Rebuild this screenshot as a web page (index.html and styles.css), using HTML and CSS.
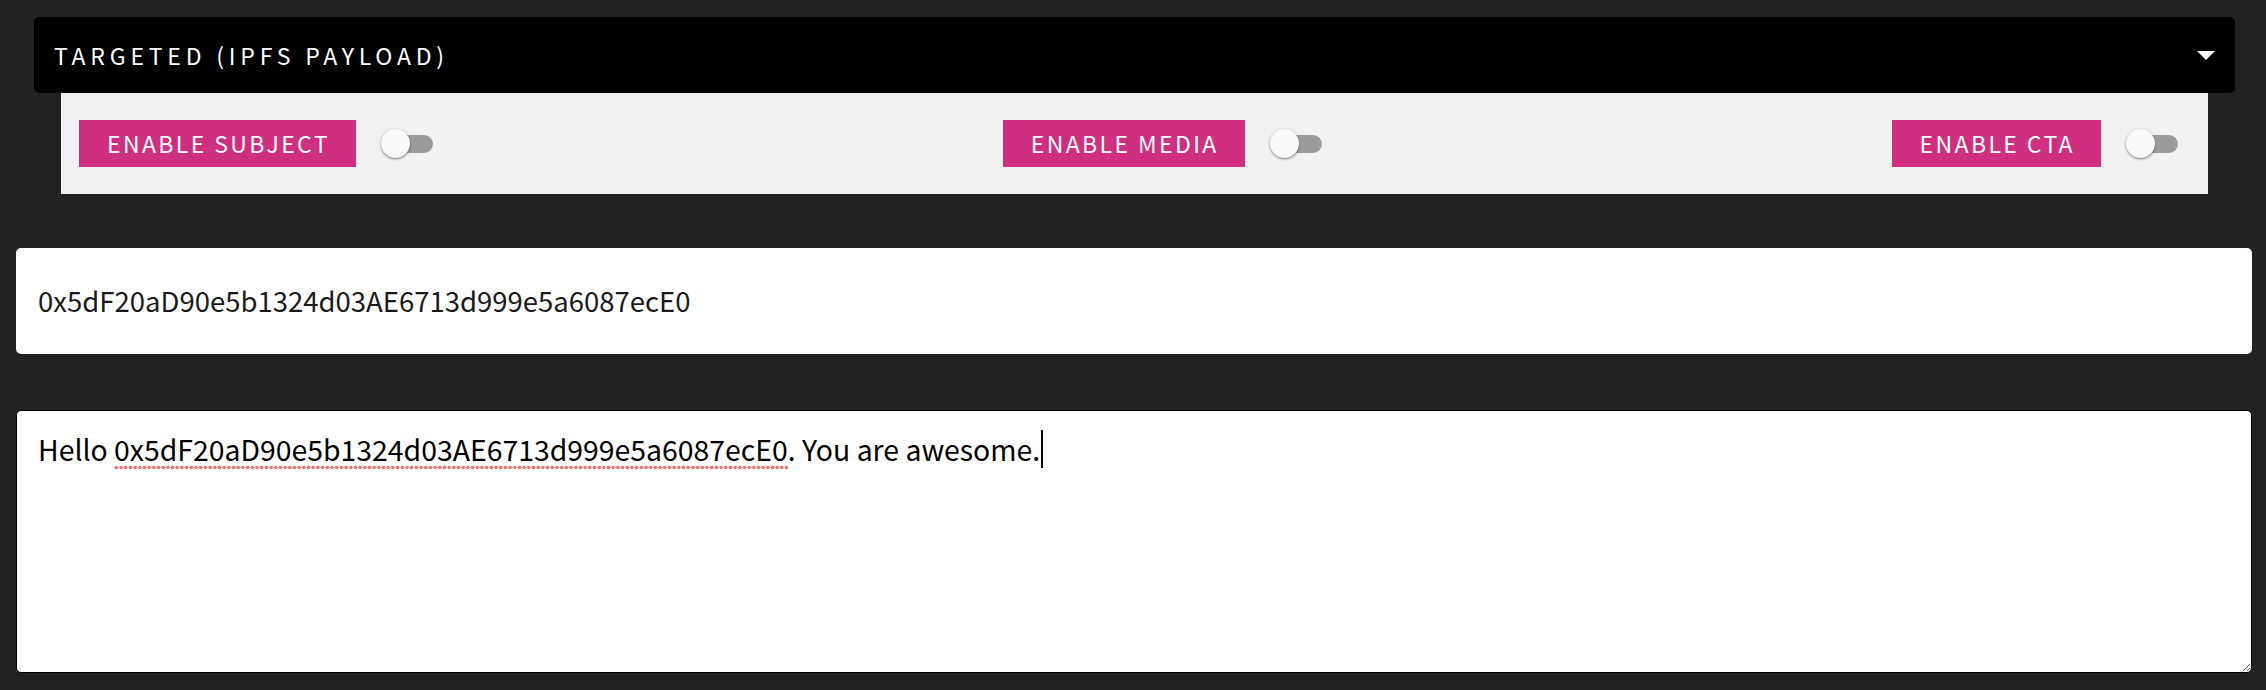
FILE: index.html
```html
<!DOCTYPE html>
<html lang="en">
<head>
<meta charset="utf-8">
<title>Targeted (IPFS Payload)</title>
<link rel="stylesheet" href="styles.css">
</head>
<body>
<div class="page">
  <section class="accordion">
    <div class="acc-header">
      <span class="acc-title">TARGETED (IPFS PAYLOAD)</span>
      <span class="acc-arrow"></span>
    </div>
    <div class="acc-panel">
      <div class="opt">
        <button class="pink-btn">ENABLE SUBJECT</button>
        <span class="switch"><span class="knob"></span></span>
      </div>
      <div class="opt">
        <button class="pink-btn">ENABLE MEDIA</button>
        <span class="switch"><span class="knob"></span></span>
      </div>
      <div class="opt">
        <button class="pink-btn">ENABLE CTA</button>
        <span class="switch"><span class="knob"></span></span>
      </div>
    </div>
  </section>

  <div class="field">0x5dF20aD90e5b1324d03AE6713d999e5a6087ecE0</div>

  <div class="area">Hello <span class="misspelled">0x5dF20aD90e5b1324d03AE6713d999e5a6087ecE0</span>. You are awesome.<span class="caret"></span></div>
</div>
</body>
</html>
```

FILE: styles.css
```css
* { box-sizing: border-box; }
html, body { margin: 0; padding: 0; }
body {
  background: #222222;
  font-family: "Noto Sans CJK JP", "Source Sans Pro", "Noto Sans", sans-serif;
  width: 2266px;
  height: 690px;
  overflow: hidden;
}
.page {
  padding: 17px 14px 0 16px;
}
.accordion {
  margin: 0 17px 0 18px;
}
.acc-header {
  height: 76px;
  background: #000;
  border-radius: 5px;
  display: flex;
  align-items: center;
  justify-content: space-between;
  padding: 0 20px 0 20px;
}
.acc-title {
  color: #fff;
  font-size: 23px;
  line-height: 1;
  letter-spacing: 4.8px;
}
.acc-arrow {
  width: 0;
  height: 0;
  border-left: 9px solid transparent;
  border-right: 9px solid transparent;
  border-top: 9px solid #fff;
}
.acc-panel {
  margin: 0 27px;
  height: 101px;
  background: #f1f1f1;
  display: flex;
  align-items: center;
  justify-content: space-between;
  padding: 0 30px 0 18px;
}
.opt {
  display: flex;
  align-items: center;
}
.pink-btn {
  font-family: inherit;
  border: 0;
  margin: 0;
  background: #d02e7f;
  color: #fff;
  height: 47px;
  font-size: 23px;
  letter-spacing: 2.4px;
  padding: 0 26px 0 28px;
  line-height: 1;
}
.switch {
  position: relative;
  display: block;
  width: 49px;
  height: 18px;
  border-radius: 9px;
  background: #9b9b9b;
  margin-left: 28px;
}
.knob {
  position: absolute;
  left: -3px;
  top: -6px;
  width: 29px;
  height: 29px;
  border-radius: 50%;
  background: #fafafa;
  box-shadow: 0 1px 3px rgba(0,0,0,0.35), 0 1px 1px rgba(0,0,0,0.2);
}
.field {
  margin-top: 54px;
  height: 106px;
  background: #fff;
  border-radius: 5px;
  display: flex;
  align-items: center;
  padding: 0 22px;
  font-size: 27.5px;
  color: #1a1a1a;
  line-height: 1;
}
.area {
  margin-top: 56px;
  height: 263px;
  background: #fff;
  border: 1px solid #000;
  border-radius: 5px;
  padding: 18px 21px;
  font-size: 28.4px;
  line-height: 1.38;
  color: #000;
  resize: vertical;
  overflow: auto;
}
.misspelled {
  position: relative;
}
.misspelled::after {
  content: "";
  position: absolute;
  left: 0;
  right: 0;
  bottom: -1px;
  height: 5px;
  background-image: radial-gradient(circle, #ee7474 1.7px, transparent 2.1px);
  background-size: 4.7px 5px;
  background-repeat: repeat-x;
}
.caret {
  display: inline-block;
  width: 2px;
  height: 38px;
  background: #000;
  vertical-align: -7px;
  margin-left: 1px;
}
```
